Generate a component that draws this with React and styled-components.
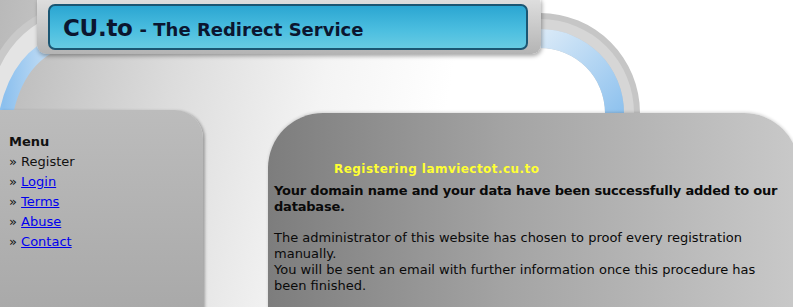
import React from "react"
import styled, { createGlobalStyle } from "styled-components"

const GlobalStyle = createGlobalStyle`
  html, body {
    margin: 0;
    padding: 0;
    overflow: hidden;
  }
  body {
    width: 793px;
    height: 307px;
    font-family: "DejaVu Sans", Verdana, sans-serif;
    background: linear-gradient(100deg, #b9b9b9 0%, #dcdcdc 22%, #f4f4f4 40%, #ffffff 55%);
  }
`

const Page = styled.div`
  position: relative;
  width: 793px;
  height: 307px;
  overflow: hidden;
`

// decorative pipes behind the header
const Pipes = styled.svg`
  position: absolute;
  left: 0;
  top: 0;
  width: 793px;
  height: 130px;
`

const HeaderRow = styled.header`
  position: relative;
  display: flex;
  padding-left: 37px;
  margin-top: -6px;
`

const HeaderFrame = styled.div`
  width: 504px;
  height: 60px;
  box-sizing: border-box;
  padding: 10px 13px 4px 11px;
  border-radius: 9px;
  background: linear-gradient(#e2e2e2, #b4b4b4);
  box-shadow: 1px 2px 4px rgba(0, 0, 0, 0.35), inset 0 1px 0 #f4f4f4;
`

const TitleBar = styled.div`
  height: 46px;
  box-sizing: border-box;
  display: flex;
  align-items: center;
  padding: 2px 0 0 13px;
  border: 2px solid #1b5673;
  border-radius: 7px;
  background: linear-gradient(#2ba6d2, #4dbfe0 60%, #67cbe3);
  color: #0b1630;
  font-weight: bold;
  white-space: nowrap;
`

const Brand = styled.span`
  font-size: 23px;
  letter-spacing: -0.3px;
`

const Tagline = styled.span`
  font-size: 18px;
  margin-left: 7px;
  padding-top: 3px;
`

const Main = styled.div`
  position: relative;
  display: flex;
  align-items: flex-start;
  margin-top: 56px;
`

const MenuPanel = styled.nav`
  width: 203px;
  height: 200px;
  box-sizing: border-box;
  padding: 22px 0 0 9px;
  border-top-right-radius: 28px;
  background: linear-gradient(#bcbcbc, #a9a9a9);
  box-shadow: 2px 1px 3px rgba(0, 0, 0, 0.3);
  font-size: 13px;
  line-height: 20px;
  color: #111;
`

const MenuTitle = styled.div`
  font-weight: bold;
`

const MenuItem = styled.div`
  a {
    color: #0000ee;
    text-decoration: underline;
  }
`

const ContentPanel = styled.section`
  flex: 1;
  height: 200px;
  margin: 3px -6px 0 65px;
  box-sizing: border-box;
  padding: 48px 14px 0 6px;
  border-radius: 55px 55px 0 0;
  background: linear-gradient(to right, #7d7d7d, #a4a4a4 45%, #c9c9c9);
  box-shadow: 0 -1px 3px rgba(0, 0, 0, 0.15);
  font-size: 13px;
  line-height: 16px;
  color: #0a0a0a;
`

const Heading = styled.div`
  padding-left: 60px;
  color: #ffff33;
  font-weight: bold;
  font-size: 12px;
  letter-spacing: 0.45px;
  line-height: 16px;
  margin-bottom: 6px;
`

const Strong = styled.p`
  margin: 0 0 15px;
  font-weight: bold;
  letter-spacing: -0.2px;
`

const Text = styled.p`
  margin: 0;
`

const menu = [
  { label: "Register" },
  { label: "Login", href: "#" },
  { label: " Terms", href: "#" },
  { label: " Abuse", href: "#" },
  { label: "Contact", href: "#" },
]

export default function App() {
  return (
    <Page>
      <GlobalStyle />
      <Pipes viewBox="0 0 793 130">
        <defs>
          <linearGradient id="blueL" x1="0" y1="0" x2="1" y2="0">
            <stop offset="0" stopColor="#8cc0ee" />
            <stop offset="1" stopColor="#cfe4f6" />
          </linearGradient>
          <linearGradient id="blueR" x1="0" y1="0" x2="1" y2="1">
            <stop offset="0" stopColor="#dcebf8" />
            <stop offset="1" stopColor="#8dc1ee" />
          </linearGradient>
        </defs>
        {/* left pipe */}
        <path d="M -8 125 Q 2 40 60 22" fill="none" stroke="#c9c9c9" strokeWidth="30" />
        <path d="M -6 125 Q 4 44 60 24" fill="none" stroke="#e4e4e4" strokeWidth="20" />
        <path d="M 4 125 Q 14 58 60 42" fill="none" stroke="url(#blueL)" strokeWidth="14" />
        {/* right pipe: quarter annulus centred at (540,113) */}
        <path d="M 540 13 A 100 100 0 0 1 640 113 L 605 113 A 65 65 0 0 0 540 48 Z" fill="#c6c6c6" />
        <path d="M 540 19 A 94 94 0 0 1 634 113 L 624 113 A 84 84 0 0 0 540 29 Z" fill="#d6d6d6" />
        <path d="M 540 29 A 84 84 0 0 1 624 113 L 605 113 A 65 65 0 0 0 540 48 Z" fill="url(#blueR)" />
      </Pipes>

      <HeaderRow>
        <HeaderFrame>
          <TitleBar>
            <Brand>CU.to</Brand>
            <Tagline>- The Redirect Service</Tagline>
          </TitleBar>
        </HeaderFrame>
      </HeaderRow>

      <Main>
        <MenuPanel>
          <MenuTitle>Menu</MenuTitle>
          {menu.map(item => (
            <MenuItem key={item.label}>
              » {item.href ? <a href={item.href}>{item.label}</a> : item.label}
            </MenuItem>
          ))}
        </MenuPanel>
        <ContentPanel>
          <Heading>Registering lamviectot.cu.to</Heading>
          <Strong>
            Your domain name and your data have been successfully added to our
            database.
          </Strong>
          <Text>
            The administrator of this website has chosen to proof every
            registration manually.
            <br />
            You will be sent an email with further information once this
            procedure has been finished.
          </Text>
        </ContentPanel>
      </Main>
    </Page>
  )
}
